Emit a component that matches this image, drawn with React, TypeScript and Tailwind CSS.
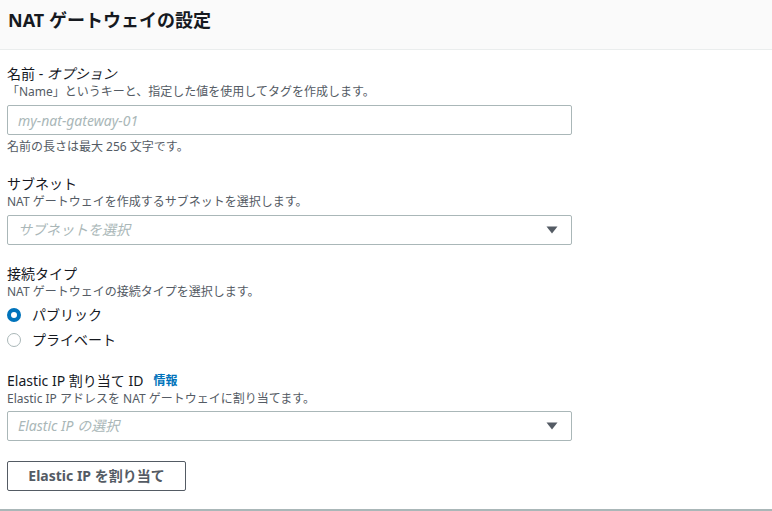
import { useState } from "react";

const FONT = {
  fontFamily: '"Noto Sans", "Noto Sans CJK JP", sans-serif',
};

/* ================= SMALL PIECES ================= */

function Caret() {
  return (
    <svg width="12" height="8" viewBox="0 0 12 8" className="shrink-0">
      <path d="M0.5 0.5 H11.5 L6 7.5 Z" fill="#545b64" />
    </svg>
  );
}

function SelectBox({ placeholder }: { placeholder: string }) {
  return (
    <div className="flex items-center justify-between w-[565px] h-[30px] border border-[#aab7b8] rounded-[2px] pl-[10px] pr-[13px] bg-white">
      <span className="italic text-sm text-[#aab7b8]">{placeholder}</span>
      <Caret />
    </div>
  );
}

function Radio({ checked, label, onClick }: { checked: boolean; label: string; onClick: () => void }) {
  return (
    <button type="button" onClick={onClick} className="flex items-center h-[25px] text-left">
      {checked ? (
        <span className="w-[14px] h-[14px] rounded-full border-[4px] border-[#0073bb] bg-white" />
      ) : (
        <span className="w-[14px] h-[14px] rounded-full border border-[#aab7b8] bg-white" />
      )}
      <span className="ml-[11px] text-sm text-[#16191f]">{label}</span>
    </button>
  );
}

/* ================= UI ================= */

export default function App() {
  const [connType, setConnType] = useState("public");
  const [name, setName] = useState("");

  return (
    <div style={FONT} className="w-[772px] h-[511px] bg-white overflow-hidden flex flex-col">
      {/* HEADER */}
      <div className="h-[50px] shrink-0 bg-[#fafafa] border-b border-[#eaeded] pl-[8px] pt-[7px]">
        <h2 className="text-[18px] leading-[26px] font-bold text-[#16191f]">NAT ゲートウェイの設定</h2>
      </div>

      {/* FORM */}
      <div className="flex-1 pl-[7px] pt-[14px] flex flex-col">
        {/* NAME */}
        <div>
          <div className="text-sm leading-[20px] text-[#16191f]">
            名前 - <span className="italic">オプション</span>
          </div>
          <div className="text-xs leading-[16px] text-[#545b64]">
            「Name」というキーと、指定した値を使用してタグを作成します。
          </div>
          <input
            value={name}
            onChange={e => setName(e.target.value)}
            placeholder="my-nat-gateway-01"
            className="mt-[5px] w-[565px] h-[30px] border border-[#aab7b8] rounded-[2px] px-[10px] text-sm text-[#16191f] placeholder:italic placeholder:text-[#aab7b8] outline-none"
          />
          <div className="mt-[4px] text-xs leading-[16px] text-[#545b64]">名前の長さは最大 256 文字です。</div>
        </div>

        {/* SUBNET */}
        <div className="mt-[19px]">
          <div className="text-sm leading-[20px] text-[#16191f]">サブネット</div>
          <div className="text-xs leading-[16px] text-[#545b64]">NAT ゲートウェイを作成するサブネットを選択します。</div>
          <div className="mt-[5px]">
            <SelectBox placeholder="サブネットを選択" />
          </div>
        </div>

        {/* CONNECTIVITY */}
        <div className="mt-[19px]">
          <div className="text-sm leading-[20px] text-[#16191f]">接続タイプ</div>
          <div className="text-xs leading-[16px] text-[#545b64]">NAT ゲートウェイの接続タイプを選択します。</div>
          <div className="mt-[2px] flex flex-col">
            <Radio checked={connType === "public"} label="パブリック" onClick={() => setConnType("public")} />
            <Radio checked={connType === "private"} label="プライベート" onClick={() => setConnType("private")} />
          </div>
        </div>

        {/* ELASTIC IP */}
        <div className="mt-[19px]">
          <div className="text-sm leading-[20px] text-[#16191f] flex items-center">
            Elastic IP 割り当て ID
            <span className="ml-[10px] text-xs font-bold text-[#0073bb]">情報</span>
          </div>
          <div className="text-xs leading-[16px] text-[#545b64]">
            Elastic IP アドレスを NAT ゲートウェイに割り当てます。
          </div>
          <div className="mt-[4px]">
            <SelectBox placeholder="Elastic IP の選択" />
          </div>
        </div>

        <button
          type="button"
          className="mt-[20px] w-[179px] h-[30px] border border-[#545b64] rounded-[2px] text-sm font-bold text-[#545b64] bg-white"
        >
          Elastic IP を割り当て
        </button>
      </div>

      <div className="h-[2px] shrink-0 bg-[#aab7b8]" />
    </div>
  );
}
